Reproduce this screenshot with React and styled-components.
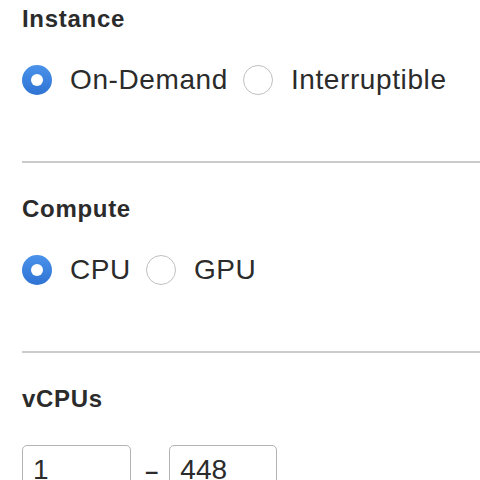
import React, {useState} from 'react';
import styled, {createGlobalStyle} from "styled-components";

const GlobalStyle = createGlobalStyle`
  body {
    margin: 0;
    background: #fff;
    font-family: "Liberation Sans", Arial, Helvetica, sans-serif;
    color: #2b2b2b;
  }
`;

const Panel = styled.div`
  padding: 5px 0 0 22px;
  width: 458px;
  height: 475px;
  overflow: hidden;
`;

const Section = styled.section`
  display: flex;
  flex-direction: column;
`;

const Heading = styled.h3`
  margin: 0;
  font-size: 24px;
  line-height: 28px;
  font-weight: 700;
  letter-spacing: 0.7px;
  color: #2b2b2b;
`;

const OptionRow = styled.div`
  display: flex;
  align-items: center;
  gap: 15px;
  margin-top: 32px;
`;

const Option = styled.label`
  display: flex;
  align-items: center;
  gap: 18px;
  cursor: pointer;
  font-size: 28px;
  line-height: 30px;
  letter-spacing: 0.6px;
  color: #2b2b2b;
`;

const Radio = styled.span`
  box-sizing: border-box;
  width: 30px;
  height: 30px;
  border-radius: 50%;
  flex: none;
  display: flex;
  align-items: center;
  justify-content: center;
  background: ${p => p.$checked ? "linear-gradient(#4a92ea, #2f73d3)" : "#fff"};
  border: ${p => p.$checked ? "none" : "1.5px solid #bfbfbf"};

  &::after {
    content: "";
    display: ${p => p.$checked ? "block" : "none"};
    width: 12px;
    height: 12px;
    border-radius: 50%;
    background: #fff;
  }
`;

const Divider = styled.hr`
  margin: 66px 0 32px;
  border: 0;
  height: 2px;
  background: #cbcbcb;
  width: 100%;
`;

const RangeRow = styled.div`
  display: flex;
  align-items: flex-start;
  margin-top: 32px;
`;

const NumberInput = styled.input`
  box-sizing: border-box;
  width: ${p => p.$width}px;
  height: 44px;
  border: 1px solid #b4b4b4;
  border-radius: 5px;
  padding: 6px 10px 0;
  font-family: "Liberation Sans", Arial, sans-serif;
  font-size: 28px;
  color: #2b2b2b;
  outline: none;
`;

const Dash = styled.span`
  display: inline-block;
  margin: 18px 13px 0 16px;
  font-size: 28px;
  line-height: 16px;
  transform: scaleX(1.7);
`;

const RadioGroup = ({options, value, onChange}) => (
  <OptionRow>
    {options.map(opt => (
      <Option key={opt} onClick={() => onChange(opt)}>
        <Radio $checked={value === opt} />
        {opt}
      </Option>
    ))}
  </OptionRow>
);

const App = () => {
  const [instance, setInstance] = useState("On-Demand");
  const [compute, setCompute] = useState("CPU");

  return (
    <>
      <GlobalStyle />
      <Panel>
        <Section>
          <Heading>Instance</Heading>
          <RadioGroup options={["On-Demand", "Interruptible"]} value={instance} onChange={setInstance} />
        </Section>
        <Divider />
        <Section>
          <Heading>Compute</Heading>
          <RadioGroup options={["CPU", "GPU"]} value={compute} onChange={setCompute} />
        </Section>
        <Divider />
        <Section>
          <Heading>vCPUs</Heading>
          <RangeRow>
            <NumberInput $width={109} defaultValue="1" />
            <Dash>-</Dash>
            <NumberInput $width={108} defaultValue="448" />
          </RangeRow>
        </Section>
      </Panel>
    </>
  )
}

export default App
